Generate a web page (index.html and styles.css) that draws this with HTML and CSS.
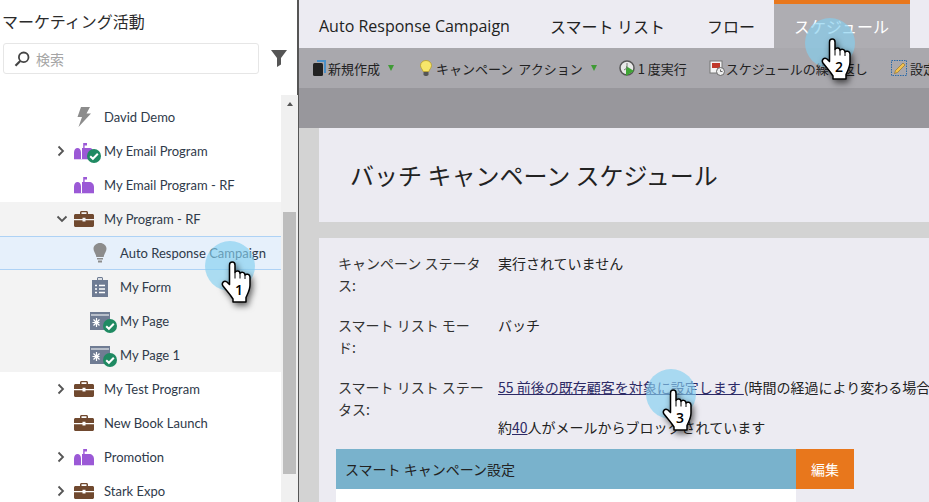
FILE: index.html
```html
<!DOCTYPE html>
<html lang="ja">
<head>
<meta charset="utf-8">
<title>マーケティング活動</title>
<link rel="stylesheet" href="styles.css">
</head>
<body>
<svg class="defs" width="0" height="0" aria-hidden="true">
  <symbol id="case" viewBox="0 0 20 16">
    <path fill="#70492f" d="M6 3V1.500C6 .7 6.700 0 7.500 0h5C13.300 0 14 .7 14 1.500V3h4.500C19.300 3 20 3.700 20 4.500V8H11.500V6.800h-3V8H0V4.500C0 3.700.7 3 1.500 3zM7.500 1.300V3h5V1.300z"/>
    <path fill="#70492f" d="M0 9.200h8.500v1.300h3V9.200H20v5.300c0 .8-.7 1.500-1.500 1.500h-17C.7 16 0 15.300 0 14.500z"/>
  </symbol>
  <symbol id="mail" viewBox="0 0 20 18">
    <path fill="#9b59d6" d="M0 10.500C0 8 1.500 6 3.500 6S7 8 7 10.500V17H0z"/>
    <path fill="#9b59d6" d="M8 6h1.200V1H13v2.600h-2.400V6H15c3 0 5 2 5 5v6H8z"/>
    <path fill="#e3d2f4" d="M0 17h20v1H0z"/>
  </symbol>
  <symbol id="check" viewBox="0 0 14 14">
    <circle cx="7" cy="7" r="7" fill="#1f8a62"/>
    <path fill="none" stroke="#fff" stroke-width="2" d="M3.200 7.200l2.700 2.600 4.900-5"/>
  </symbol>
  <symbol id="page" viewBox="0 0 20 18">
    <path fill="#6f7c93" d="M0 0h20v18H0z"/>
    <path fill="none" stroke="#fff" stroke-width="1.200" d="M1 3h18M6.500 6v9M2.500 10.500h7M3.500 7.500l6 6M9.500 7.500l-6 6"/>
  </symbol>
</svg>

<div class="app">
  <aside class="sidebar">
    <h1 class="side-title">マーケティング活動</h1>
    <div class="search-row">
      <div class="search">
        <svg class="search-ico" viewBox="0 0 16 16"><circle cx="9.700" cy="6.300" r="4.800" fill="none" stroke="#444" stroke-width="1.800"/><path d="M6.200 10L1.500 14.800" stroke="#444" stroke-width="2.200"/></svg>
        <span class="placeholder">検索</span>
      </div>
      <svg class="funnel" viewBox="0 0 16 17"><path fill="#555" d="M0 0h16L10 8v6.500L6 17V8z"/></svg>
    </div>
    <div class="tree-wrap">
      <ul class="tree">
        <li class="row"><span class="chev-none"></span><svg class="ico ico-tall" viewBox="0 0 20 20"><path fill="#8c8c8c" d="M7 0h9l-3.500 6.500H17L4.500 20l3.500-10H3.500z"/></svg><span class="label">David Demo</span></li>
        <li class="row"><svg class="chev" viewBox="0 0 8 12"><path d="M1.500 1.500L6 6l-4.500 4.500" fill="none" stroke="#555" stroke-width="1.800"/></svg><span class="ico-box"><svg class="ico"><use href="#mail"/></svg><svg class="badge"><use href="#check"/></svg></span><span class="label">My Email Program</span></li>
        <li class="row"><span class="chev-none"></span><svg class="ico"><use href="#mail"/></svg><span class="label">My Email Program - RF</span></li>
        <li class="row open"><svg class="chev-down" viewBox="0 0 12 8"><path d="M1.500 1.500L6 6l4.500-4.500" fill="none" stroke="#555" stroke-width="1.800"/></svg><svg class="ico ico-case"><use href="#case"/></svg><span class="label">My Program - RF</span></li>
        <li class="row open child selected"><span class="chev-none"></span><svg class="ico ico-tall" viewBox="0 0 20 20"><path fill="#8c8c8c" d="M10 0c3.500 0 6.500 2.500 6.500 5.800 0 3-2.300 4.500-2.800 8.200H6.300C5.800 10.300 3.500 8.800 3.500 5.800 3.500 2.500 6.500 0 10 0zM7 15h6v1.500H7zM8 17.500h4V19.500H8z"/></svg><span class="label">Auto Response Campaign</span></li>
        <li class="row open child"><span class="chev-none"></span><svg class="ico ico-tall" viewBox="0 0 20 20"><path fill="#6f7c93" d="M2 3h5V1.500C7 .7 7.700 0 8.500 0h3C12.300 0 13 .7 13 1.500V3h5v17H2z"/><path stroke="#fff" stroke-width="1.500" fill="none" d="M8 2h4M5 8.500h2M9 8.500h6M5 12h2M9 12h6M5 15.500h2M9 15.500h6"/></svg><span class="label">My Form</span></li>
        <li class="row open child"><span class="chev-none"></span><span class="ico-box"><svg class="ico"><use href="#page"/></svg><svg class="badge"><use href="#check"/></svg></span><span class="label">My Page</span></li>
        <li class="row open child"><span class="chev-none"></span><span class="ico-box"><svg class="ico"><use href="#page"/></svg><svg class="badge"><use href="#check"/></svg></span><span class="label">My Page 1</span></li>
        <li class="row"><svg class="chev" viewBox="0 0 8 12"><path d="M1.500 1.500L6 6l-4.500 4.500" fill="none" stroke="#555" stroke-width="1.800"/></svg><svg class="ico ico-case"><use href="#case"/></svg><span class="label">My Test Program</span></li>
        <li class="row"><span class="chev-none"></span><svg class="ico ico-case"><use href="#case"/></svg><span class="label">New Book Launch</span></li>
        <li class="row"><svg class="chev" viewBox="0 0 8 12"><path d="M1.500 1.500L6 6l-4.500 4.500" fill="none" stroke="#555" stroke-width="1.800"/></svg><svg class="ico"><use href="#mail"/></svg><span class="label">Promotion</span></li>
        <li class="row"><svg class="chev" viewBox="0 0 8 12"><path d="M1.500 1.500L6 6l-4.500 4.500" fill="none" stroke="#555" stroke-width="1.800"/></svg><svg class="ico ico-case"><use href="#case"/></svg><span class="label">Stark Expo</span></li>
      </ul>
      <div class="scrollbar"><span class="sb-arrow"></span><span class="sb-thumb"></span></div>
    </div>
  </aside>

  <main class="main">
    <nav class="tabs">
      <span class="tab tab-latin">Auto Response Campaign</span>
      <span class="tab">スマート リスト</span>
      <span class="tab tab-flow">フロー</span>
      <span class="tab active">スケジュール</span>
    </nav>
    <div class="toolbar">
      <span class="tool tool-first"><svg class="tool-ico" viewBox="0 0 16 16"><path fill="#4a90c8" d="M5 0h9v13h-2V2H5z"/><rect x="1" y="3" width="10" height="13" rx="1.500" fill="#222"/></svg>新規作成<i class="tri"></i></span>
      <span class="tool tool-camp"><svg class="tool-ico" viewBox="0 0 16 16"><path fill="#f7e66a" stroke="#b59c2a" stroke-width=".8" d="M8 .5c3.200 0 5.500 2.200 5.500 5 0 2.500-2 3.700-2.600 6H5.100C4.500 9.200 2.500 8 2.500 5.500c0-2.800 2.300-5 5.500-5z"/><path fill="#555" d="M5.500 12h5v3l-1.500 1H7l-1.500-1z"/></svg>キャンペーン アクション<i class="tri"></i></span>
      <span class="sep"></span>
      <span class="tool tool-run"><svg class="tool-ico" viewBox="0 0 16 16"><circle cx="8" cy="8" r="7" fill="#e8e8e8" stroke="#555" stroke-width="1.500"/><path fill="#3fa535" d="M7 6l8 5-8 5z"/><path stroke="#777" d="M8 3v5l-3 2" fill="none"/></svg>1 度実行</span>
      <span class="tool tool-sched"><svg class="tool-ico" viewBox="0 0 16 16"><rect x="1" y="1" width="12" height="12" fill="#f4f4f4" stroke="#777"/><path fill="#c0392b" d="M3 3h8v5H3z"/><circle cx="11.500" cy="11.500" r="4" fill="#eee" stroke="#666"/><path stroke="#666" fill="none" d="M11.500 9.500v2h2"/></svg>スケジュールの繰り返し</span>
      <span class="tool tool-set"><svg class="tool-ico" viewBox="0 0 16 16"><rect x=".5" y=".5" width="15" height="15" fill="none" stroke="#2a6aa8" stroke-dasharray="1.500 1"/><path fill="#f2c14e" stroke="#8a6a1e" stroke-width=".6" d="M12 3l2 2-7.500 7.500L3.500 13.500l1-3z"/></svg>設定</span>
    </div>
    <div class="strip"></div>
    <div class="content">
      <header class="head-card"><h2 class="head-title">バッチ キャンペーン スケジュール</h2></header>
      <section class="body-card">
        <dl class="details">
          <dt>キャンペーン ステータス:</dt>
          <dd>実行されていません</dd>
          <dt>スマート リスト モード:</dt>
          <dd>バッチ</dd>
          <dt>スマート リスト ステータス:</dt>
          <dd><p class="status"><a class="link" href="#">55 前後の既存顧客を対象に設定します </a>(時間の経過により変わる場合があります)</p><p class="status status-2">約<a class="link" href="#">40</a>人がメールからブロックされています</p></dd>
        </dl>
        <div class="panel">
          <div class="panel-bar"><div class="panel-title">スマート キャンペーン設定</div><div class="panel-edit">編集</div></div>
          <div class="panel-body"></div>
        </div>
      </section>
    </div>
  </main>
</div>

<div class="touch touch-1">
  <svg class="hand" viewBox="0 0 60 70"><path class="hand-shape" d="M22.500 24c0-4 5.500-4 5.500 0v7.500c1-2.200 5-2 5 1 1-2 5-1.500 5 1.500 1-1.500 5-1 5 2v8c0 5-2 8-4 12.500v4.500H26v-3c-3-5-6-8-10-13-2-3 1-6 4-4l2.500 2.500z"/><path class="hand-line" d="M28 31.500v6M33 32.500v5M38 34v4"/></svg>
  <span class="touch-num">1</span>
</div>
<div class="touch touch-2">
  <svg class="hand" viewBox="0 0 60 70"><path class="hand-shape" d="M22.500 24c0-4 5.500-4 5.500 0v7.500c1-2.200 5-2 5 1 1-2 5-1.500 5 1.500 1-1.500 5-1 5 2v8c0 5-2 8-4 12.500v4.500H26v-3c-3-5-6-8-10-13-2-3 1-6 4-4l2.500 2.500z"/><path class="hand-line" d="M28 31.500v6M33 32.500v5M38 34v4"/></svg>
  <span class="touch-num">2</span>
</div>
<div class="touch touch-3">
  <svg class="hand" viewBox="0 0 60 70"><path class="hand-shape" d="M22.500 24c0-4 5.500-4 5.500 0v7.500c1-2.200 5-2 5 1 1-2 5-1.500 5 1.500 1-1.500 5-1 5 2v8c0 5-2 8-4 12.500v4.500H26v-3c-3-5-6-8-10-13-2-3 1-6 4-4l2.500 2.500z"/><path class="hand-line" d="M28 31.500v6M33 32.500v5M38 34v4"/></svg>
  <span class="touch-num">3</span>
</div>
</body>
</html>
```

FILE: styles.css
```css
* { box-sizing: border-box; }
html, body { margin: 0; padding: 0; height: 100%; overflow: hidden; background: #fff; }
body { font-family: "Noto Sans CJK JP", "Open Sans", sans-serif; color: #222; position: relative; }
ul, dl, dd, p, h1, h2 { margin: 0; padding: 0; }
.defs { position: absolute; }
.app { display: flex; width: 929px; height: 502px; overflow: hidden; }

/* Sidebar */
.sidebar { flex: 0 0 299px; width: 299px; border-right: 2px solid #555; display: flex; flex-direction: column; background: #fff; }
.side-title { font-size: 16px; font-weight: 400; line-height: 22px; padding: 10px 0 0 2px; color: #2b2b2b; height: 43px; }
.search-row { display: flex; align-items: center; padding-left: 3px; height: 31px; }
.search { width: 256px; height: 31px; border: 1px solid #e6e6e6; border-radius: 3px; display: flex; align-items: center; padding-left: 10px; }
.search-ico { width: 16px; height: 16px; }
.placeholder { margin-left: 6px; font-size: 14px; line-height: 28px; color: #a5a5a5; }
.funnel { width: 16px; height: 17px; margin-left: 12px; }
.tree-wrap { margin-top: 21px; flex: 1; display: flex; min-height: 0; }
.tree { list-style: none; flex: 0 0 281px; padding-top: 5px; overflow: hidden; font-family: Lato, "Open Sans", sans-serif; }
.row { height: 34px; display: flex; align-items: center; padding-left: 56px; font-size: 13px; color: #2f3a4a; white-space: nowrap; }
.row.open { background: #f3f3f3; }
.row.child { padding-left: 72px; }
.row.selected { background: #e6f0fb; border-top: 1px solid #aed2f5; border-bottom: 1px solid #aed2f5; }
.chev-none { flex: 0 0 18px; }
.chev { flex: 0 0 8px; width: 8px; height: 12px; margin: 0 9px 0 1px; }
.chev-down { flex: 0 0 12px; width: 12px; height: 8px; margin-right: 6px; }
.ico { flex: 0 0 20px; width: 20px; height: 18px; display: block; }
.ico-tall { height: 20px; }
.ico-case { height: 16px; }
.ico-box { flex: 0 0 20px; width: 20px; height: 18px; position: relative; }
.badge { position: absolute; left: 13px; top: 7px; width: 14px; height: 14px; }
.label { margin-left: 10px; }
.scrollbar { flex: 0 0 16px; background: #f0f0f0; position: relative; padding: 0 2px; display: flex; flex-direction: column; }
.sb-arrow { width: 0; height: 0; margin: 7px auto 0; border: 3.500px solid transparent; border-top: 0; border-bottom: 4px solid #555; }
.sb-thumb { width: 13px; height: 262px; margin-top: 106px; background: #bdbdbd; }

/* Main */
.main { flex: 1; min-width: 0; display: flex; flex-direction: column; background: #d3d3d3; }
.tabs { height: 48px; background: #ecebf2; display: flex; }
.tab { padding: 4px 20px 0; font-size: 16px; line-height: 44px; color: #222; white-space: nowrap; }
.tab-latin { font-family: "Open Sans", sans-serif; }
.tab-flow { margin-left: 2px; padding-right: 19px; }
.tab.active { background: #aeadb2; color: #fff; border-top: 4px solid #e8771c; padding-top: 0; padding-right: 21px; }
.toolbar { height: 40px; background: #a9a8ad; display: flex; align-items: center; font-size: 13px; white-space: nowrap; color: #222; overflow: hidden; }
.tool { display: flex; align-items: center; }
.tool-first { margin-left: 13px; }
.tool-ico { width: 16px; height: 16px; }
.tri { width: 0; height: 0; margin-left: 8px; border: 3.500px solid transparent; border-top: 6px solid #3f9a35; border-bottom: 0; }
.tool-camp { margin-left: 24px; word-spacing: 2px; }
.tool-camp .tool-ico { margin-right: 2px; }
.sep { width: 1px; height: 40px; background: #98979c; margin: 0 13px 0 9px; }
.tool-run .tool-ico { margin-right: 3px; }
.tool-sched { margin-left: 22px; }
.tool-sched .tool-ico { margin-right: 1px; }
.tool-set { margin-left: 23px; }
.tool-set .tool-ico { margin-right: 3px; }
.strip { height: 40px; background: #98979c; }
.content { flex: 1; padding-left: 20px; min-height: 0; }
.head-card { height: 94px; background: #ecebf2; display: flex; align-items: center; padding-left: 31px; }
.head-title { font-size: 24px; line-height: 32px; font-weight: 400; color: #222; white-space: nowrap; }
.body-card { margin-top: 16px; height: 300px; background: #ecebf2; padding: 14px 0 0 17px; overflow: hidden; }
.details { display: grid; grid-template-columns: 148px 1fr; column-gap: 12px; row-gap: 18px; font-size: 14px; line-height: 22px; padding-left: 2px; }
.details dt { color: #333; }
.details dd { white-space: nowrap; }
.status-2 { margin-top: 18px; }
.link { color: #2d2a66; text-decoration: underline; }
.panel { margin-top: 11px; width: 518px; }
.panel-bar { display: flex; height: 40px; }
.panel-title { width: 460px; background: #79b2cc; font-size: 14px; line-height: 40px; padding-left: 9px; color: #222; }
.panel-edit { width: 58px; background: #e8771c; color: #fff; font-size: 14px; line-height: 40px; text-align: center; }
.panel-body { width: 460px; height: 40px; background: #fff; }

/* Click markers overlaying the screenshot */
.touch { position: absolute; width: 50px; height: 50px; border-radius: 50%; background: rgba(132, 207, 240, .65); }
.touch-1 { left: 205px; top: 241px; }
.touch-2 { left: 805px; top: 18px; }
.touch-3 { left: 646px; top: 369px; }
.hand { position: absolute; left: 2px; top: 0; width: 60px; height: 70px; overflow: visible; filter: drop-shadow(2px 3px 3px rgba(0,0,0,.6)); }
.hand-shape { fill: #fff; stroke: #000; stroke-width: 1.500; stroke-linejoin: round; }
.hand-line { fill: none; stroke: #000; stroke-width: 1; }
.touch-num { position: absolute; left: 28px; top: 40px; width: 12px; text-align: center; font-family: "Open Sans", sans-serif; font-size: 14px; font-weight: 600; line-height: 18px; color: #000; }
```
